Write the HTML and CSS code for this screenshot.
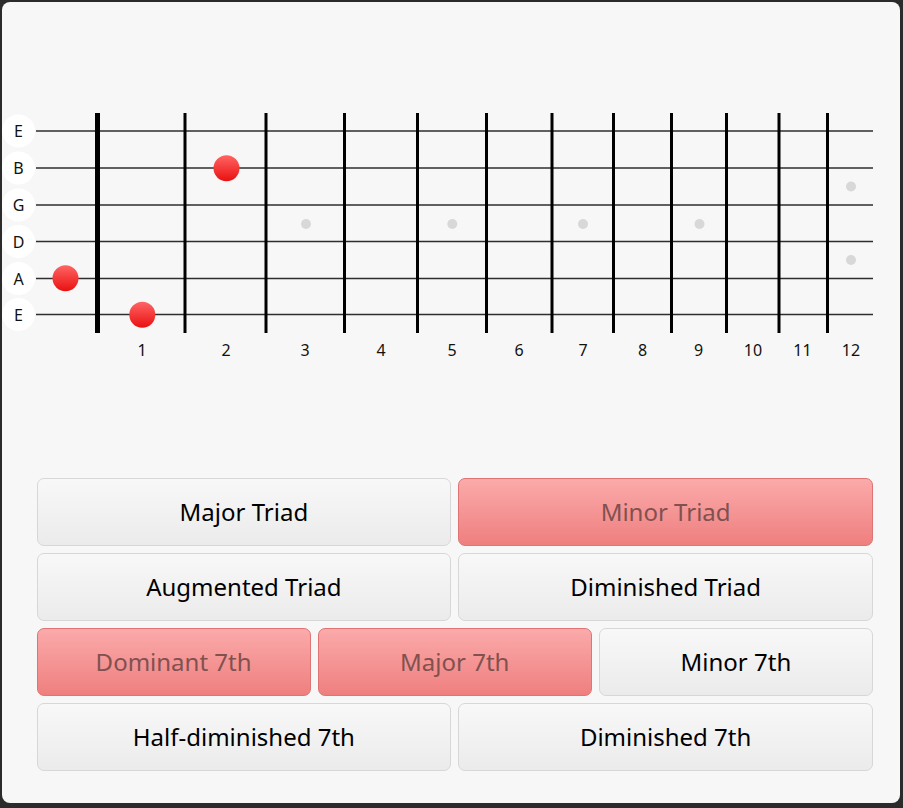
FILE: index.html
```html
<!DOCTYPE html>
<html>
<head>
<meta charset="utf-8">
<link rel="stylesheet" href="styles.css">
</head>
<body>
<div class="panel">
  <svg class="fretboard" width="898" height="370" viewBox="2 2 898 370">
    <defs>
      <linearGradient id="dot" x1="0" y1="0" x2="0" y2="1">
        <stop offset="0" stop-color="#ff6464"/>
        <stop offset="1" stop-color="#ea1010"/>
      </linearGradient>
    </defs>
    <g class="labels">
      <circle cx="18.5" cy="131" r="16.5"/>
      <circle cx="18.5" cy="168" r="16.5"/>
      <circle cx="18.5" cy="205" r="16.5"/>
      <circle cx="18.5" cy="241.5" r="16.5"/>
      <circle cx="18.5" cy="278.5" r="16.5"/>
      <circle cx="18.5" cy="314.5" r="16.5"/>
    </g>
    <g class="label-text">
      <text x="18.5" y="131">E</text>
      <text x="18.5" y="168">B</text>
      <text x="18.5" y="205">G</text>
      <text x="18.5" y="241.5">D</text>
      <text x="18.5" y="278.5">A</text>
      <text x="18.5" y="314.5">E</text>
    </g>
    <g class="strings">
      <line x1="36" y1="131" x2="873" y2="131"/>
      <line x1="36" y1="168" x2="873" y2="168"/>
      <line x1="36" y1="205" x2="873" y2="205"/>
      <line x1="36" y1="241.5" x2="873" y2="241.5"/>
      <line x1="36" y1="278.5" x2="873" y2="278.5"/>
      <line x1="36" y1="314.5" x2="873" y2="314.5"/>
    </g>
    <line class="nut" x1="97.5" y1="113" x2="97.5" y2="333"/>
    <g class="frets">
      <line x1="185" y1="113" x2="185" y2="333"/>
      <line x1="266" y1="113" x2="266" y2="333"/>
      <line x1="344.5" y1="113" x2="344.5" y2="333"/>
      <line x1="417.5" y1="113" x2="417.5" y2="333"/>
      <line x1="486.5" y1="113" x2="486.5" y2="333"/>
      <line x1="552" y1="113" x2="552" y2="333"/>
      <line x1="613.5" y1="113" x2="613.5" y2="333"/>
      <line x1="671.5" y1="113" x2="671.5" y2="333"/>
      <line x1="726.5" y1="113" x2="726.5" y2="333"/>
      <line x1="779" y1="113" x2="779" y2="333"/>
      <line x1="827.5" y1="113" x2="827.5" y2="333"/>
    </g>
    <g class="inlays">
      <circle cx="306" cy="224" r="5"/>
      <circle cx="452.3" cy="224" r="5"/>
      <circle cx="583" cy="224" r="5"/>
      <circle cx="699.5" cy="224" r="5"/>
      <circle cx="851" cy="186.5" r="5"/>
      <circle cx="851" cy="260" r="5"/>
    </g>
    <g class="notes">
      <circle cx="65.5" cy="278.3" r="13"/>
      <circle cx="226.5" cy="168.3" r="13"/>
      <circle cx="142.3" cy="314.8" r="13"/>
    </g>
    <g class="fret-numbers">
      <text x="142" y="350">1</text>
      <text x="226" y="350">2</text>
      <text x="305" y="350">3</text>
      <text x="381" y="350">4</text>
      <text x="452" y="350">5</text>
      <text x="519" y="350">6</text>
      <text x="583" y="350">7</text>
      <text x="642.5" y="350">8</text>
      <text x="698.5" y="350">9</text>
      <text x="753" y="350">10</text>
      <text x="802.5" y="350">11</text>
      <text x="851" y="350">12</text>
    </g>
  </svg>
  <div class="chords">
    <button class="chord half">Major Triad</button>
    <button class="chord half on">Minor Triad</button>
    <button class="chord half">Augmented Triad</button>
    <button class="chord half">Diminished Triad</button>
    <button class="chord third on">Dominant 7th</button>
    <button class="chord third on">Major 7th</button>
    <button class="chord third">Minor 7th</button>
    <button class="chord half">Half-diminished 7th</button>
    <button class="chord half">Diminished 7th</button>
  </div>
</div>
</body>
</html>
```

FILE: styles.css
```css
html, body {
  margin: 0;
  padding: 0;
  background: #2b2b2b;
  width: 903px;
  height: 808px;
  overflow: hidden;
}

body {
  padding: 2px 3px 5px 2px;
  box-sizing: border-box;
}

.panel {
  width: 898px;
  height: 801px;
  background: #f7f7f7;
  border-radius: 8px;
  overflow: hidden;
}

.fretboard {
  display: block;
}

.labels circle {
  fill: #ffffff;
}

.label-text text,
.fret-numbers text {
  font-family: "Noto Sans", "Open Sans", sans-serif;
  font-size: 16px;
  fill: #111;
  text-anchor: middle;
  dominant-baseline: central;
}

.strings line {
  stroke: #2e2e2e;
  stroke-width: 1.6;
}

.nut {
  stroke: #000;
  stroke-width: 5;
}

.frets line {
  stroke: #000;
  stroke-width: 3;
}

.inlays circle {
  fill: #d8d8d8;
}

.notes circle {
  fill: url(#dot);
}

.chords {
  display: grid;
  grid-template-columns: repeat(6, 1fr);
  grid-auto-rows: 68px;
  gap: 7px;
  margin: 105.5px 27px 0 34.5px;
}

.chord {
  font-family: "Noto Sans", "Open Sans", sans-serif;
  font-size: 24px;
  color: #000;
  border: 1px solid #d7d7d7;
  border-radius: 7px;
  background: linear-gradient(#f8f8f8, #ebebeb);
  padding: 0;
  margin: 0;
  cursor: pointer;
}

.chord.half {
  grid-column: span 3;
}

.chord.third {
  grid-column: span 2;
}

.chord.on {
  background: linear-gradient(#fbaaaa, #ef7f7f);
  border-color: #de7474;
  color: #80514f;
}
```
